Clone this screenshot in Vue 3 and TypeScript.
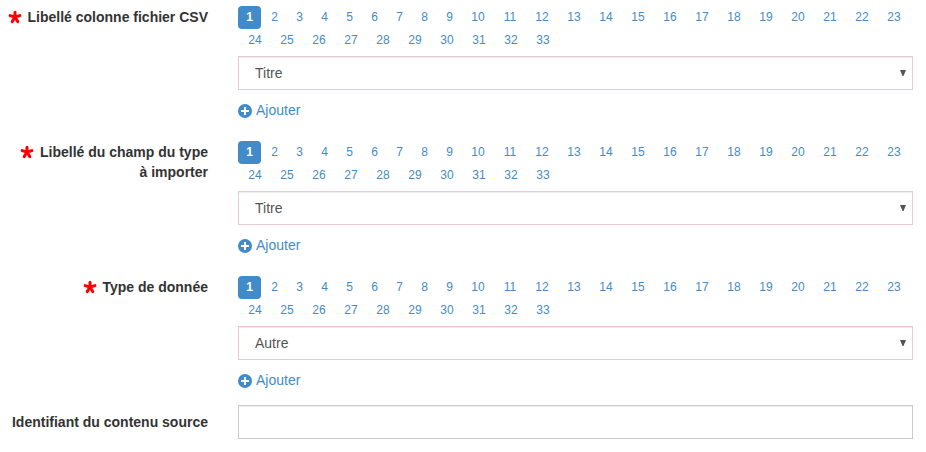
<script setup lang="ts">
import { reactive, ref } from 'vue'

interface Field {
  id: string
  label: string
  page: number
  value: string
  options: string[]
}

const pageCount = 33

const fields = reactive<Field[]>([
  { id: 'colonne', label: 'Libellé colonne fichier CSV', page: 1, value: 'Titre', options: ['Titre'] },
  { id: 'champ', label: 'Libellé du champ du type\nà importer', page: 1, value: 'Titre', options: ['Titre'] },
  { id: 'type', label: 'Type de donnée', page: 1, value: 'Autre', options: ['Autre'] },
])

const source = ref('')
</script>

<template>
  <form class="form" @submit.prevent>
    <div v-for="field in fields" :key="field.id" class="group">
      <label class="label" :for="field.id">
        <svg class="required" viewBox="0 0 14 14" aria-hidden="true">
          <path d="M7 7V2.2M7 7L2.1 5.6M7 7L11.9 5.6M7 7L4.2 11.6M7 7L9.8 11.6" />
        </svg>
        {{ field.label }}
      </label>
      <div class="content">
        <nav class="pages">
          <a
            v-for="n in pageCount"
            :key="n"
            :href="`#${field.id}-${n}`"
            class="page"
            :class="{ wide: n > 9, active: n === field.page }"
            @click.prevent="field.page = n"
          >{{ n }}</a>
        </nav>
        <div class="select">
          <select :id="field.id" v-model="field.value" class="control">
            <option v-for="o in field.options" :key="o">{{ o }}</option>
          </select>
          <svg class="arrow" viewBox="0 0 6 6" aria-hidden="true"><path d="M0 0H6L3.5 6H2.5Z" /></svg>
        </div>
        <a class="add" :href="`#${field.id}`" @click.prevent>
          <svg class="plus" viewBox="0 0 14 14" aria-hidden="true">
            <circle cx="7" cy="7" r="7" />
            <path d="M7 3V11M3 7H11" />
          </svg>
          <span>Ajouter</span>
        </a>
      </div>
    </div>
    <div class="group">
      <label class="label" for="source">Identifiant du contenu source</label>
      <input id="source" v-model="source" class="control plain" type="text">
    </div>
  </form>
</template>

<style>
body {
  background: #fff;
}
</style>

<style scoped>
.form {
  display: flex;
  flex-direction: column;
  gap: 15px;
  padding: 0 13px 13px 0;
  font: 14px/20px "Liberation Sans", Arial, sans-serif;
  color: #333;
}

.group {
  display: grid;
  grid-template-columns: 208px minmax(0, 1fr);
  column-gap: 30px;
  align-items: start;
}

.label {
  padding-top: 7px;
  font-weight: bold;
  text-align: right;
  white-space: pre-line;
}

.required {
  width: 14px;
  height: 14px;
  margin-right: 2px;
  vertical-align: -2px;
  fill: none;
  stroke: #f00;
  stroke-width: 3;
  stroke-linecap: round;
}

.content {
  display: flex;
  flex-direction: column;
  align-items: stretch;
  padding-top: 6px;
}

.pages {
  display: flex;
  flex-wrap: wrap;
  margin-bottom: 4px;
  font-size: 12px;
  line-height: 23px;
}

.page {
  width: 23px;
  margin-left: 2px;
  border-radius: 4px;
  color: #428bca;
  text-align: center;
  text-decoration: none;
}

.page:first-child {
  margin-left: 0;
}

.page.wide {
  width: 30px;
}

.page.active {
  background: #428bca;
  color: #fff;
  font-weight: bold;
}

.select {
  position: relative;
}

.control {
  display: block;
  box-sizing: border-box;
  width: 100%;
  height: 34px;
  margin: 0;
  padding: 6px 16px;
  border: 1px solid #e8cad0;
  border-radius: 0;
  outline: 0;
  background: #fff;
  box-shadow: inset 0 1px 1px rgba(0, 0, 0, 0.075);
  appearance: none;
  font: inherit;
  color: #555;
}

.control.plain {
  padding: 6px 12px;
  border-color: #ccc;
}

.arrow {
  position: absolute;
  top: 14px;
  right: 7px;
  width: 6px;
  height: 6px;
  fill: #555;
  pointer-events: none;
}

.add {
  display: flex;
  align-items: center;
  align-self: flex-start;
  gap: 4px;
  margin-top: 10px;
  color: #428bca;
  text-decoration: none;
}

.plus {
  width: 14px;
  height: 14px;
  margin-top: 2px;
  fill: #428bca;
}

.plus path {
  stroke: #fff;
  stroke-width: 2;
}
</style>
